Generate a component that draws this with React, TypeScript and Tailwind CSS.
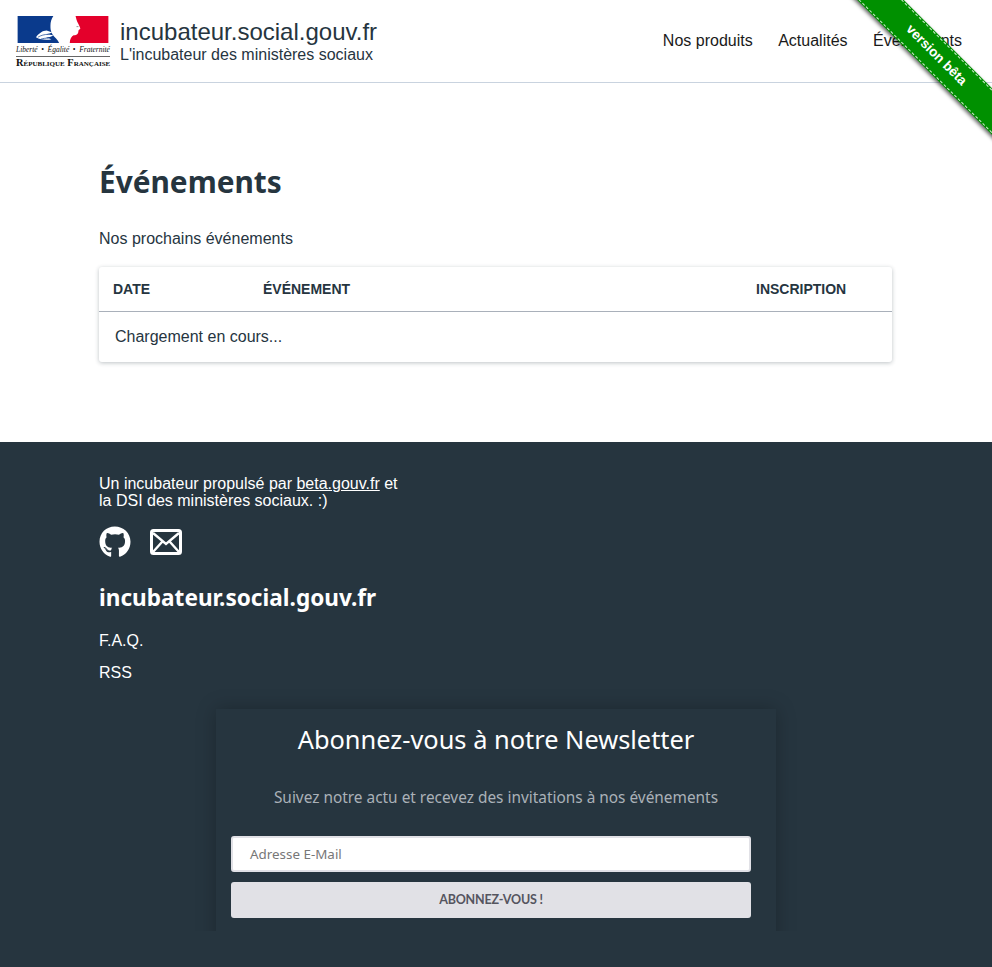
import React from 'react'
import { FaGithub } from 'react-icons/fa'

const SANS = "font-['Liberation_Sans',Arial,sans-serif]"
const HEADING = "font-['Noto_Sans',sans-serif]"

const Logo = () => (
  <div className="w-[94px] h-[50px] flex flex-col shrink-0">
    <svg viewBox="0 0 94 28" className="w-[94px] h-[28px] block">
      <rect width="52" height="28" fill="#0a3a8c" />
      <rect x="52" width="42" height="28" fill="#e4002b" />
      <path
        d="M37 0h23l1 4c1 3 3 6 4 9l-2 2c0 3-1 5-5 5-2 1-4 4-4 8H43c-1-3-5-6-7-9-2-4-2-6-2-9 0-4 1-7 3-10z"
        fill="#fff"
      />
      <path
        d="M19 22c3-4 7-7 11-7l6 2c-2 1-4 1-6 2l7 1c-2 2-5 2-8 2l6 2c-4 1-11 1-16-2z"
        fill="#fff"
      />
      <path d="M21 22c3-2 7-3 11-3M24 24c3-1 5-1 8-1" stroke="#0a3a8c" strokeWidth="0.7" fill="none" />
      <path d="M61 11h2" stroke="#777" strokeWidth="0.8" />
    </svg>
    <div className="h-[8px] mt-[3px] text-[7.5px] leading-[8px] italic whitespace-nowrap text-[#111] font-['Liberation_Serif',serif] flex justify-between">
      <span>Liberté</span>
      <span>•</span>
      <span>Égalité</span>
      <span>•</span>
      <span>Fraternité</span>
    </div>
    <div className="h-px bg-[#666] mt-[2px]" />
    <div className="mt-[2px] text-[10.4px] leading-[7px] whitespace-nowrap font-semibold text-[#111] text-center [font-variant:small-caps] font-['Liberation_Serif',serif]">
      République Française
    </div>
  </div>
)

const Header = () => (
  <header className="h-[83px] border-b border-[#c9d3df] bg-white flex items-center justify-between pl-4 pr-[30px]">
    <div className="flex items-center gap-[10px]">
      <Logo />
      <div className="text-[#26353f]">
        <div className="text-[24px] leading-[28px]">incubateur.social.gouv.fr</div>
        <div className="text-base leading-[18px]">L'incubateur des ministères sociaux</div>
      </div>
    </div>
    <nav className="flex items-center gap-[25.5px] text-base text-[#1a1a1a] mt-[-1px]">
      <a>Nos produits</a>
      <a>Actualités</a>
      <a>Événements</a>
    </nav>
  </header>
)

const Ribbon = () => (
  <div className="absolute top-0 right-0 w-[160px] h-[150px] overflow-hidden pointer-events-none">
    <div className="absolute left-[-26px] top-[39px] w-[260px] h-[33px] rotate-45 bg-[#009000] shadow-[0_2px_4px_rgba(0,0,0,0.6)] p-px">
      <div className="h-full border-y border-dashed border-[#cfe9cf] flex items-center justify-center text-[13.5px] font-bold text-white">
        version bêta
      </div>
    </div>
  </div>
)

const EventsTable = () => (
  <div className="mt-[18px] rounded-[3px] bg-white shadow-[0_1px_4px_rgba(38,53,63,0.3)]">
    <div className="h-[45px] border-b border-[#a9b0ba] flex items-center text-sm font-bold uppercase text-[#26353f]">
      <div className="w-[164px] pl-[14px]">Date</div>
      <div className="w-[493px]">Événement</div>
      <div>Inscription</div>
    </div>
    <div className="h-[50px] flex items-center pl-4 text-base text-[#26353f]">Chargement en cours...</div>
  </div>
)

const MailIcon = () => (
  <svg viewBox="0 0 32 26" className="w-8 h-[26px] block">
    <rect x="1.5" y="1.5" width="29" height="23" rx="2" fill="none" stroke="#fff" strokeWidth="3" />
    <path d="M3 4l13 11L29 4M3 23l9-10M29 23l-9-10" fill="none" stroke="#fff" strokeWidth="2.4" />
  </svg>
)

const Newsletter = () => (
  <div className="overflow-hidden h-[242px] pt-5 mt-[7px]">
    <div className="w-[560px] h-[260px] mx-auto bg-[#26353f] shadow-[0_0_18px_rgba(0,0,0,0.25)] pl-[15px] pr-[25px]">
      <h2 className={`${HEADING} text-center text-[25.4px] leading-[34px] text-white pt-[13px] ml-[-15px] mr-[-25px]`}>
        Abonnez-vous à notre Newsletter
      </h2>
      <p className={`${HEADING} text-center text-[15.4px] leading-[20px] text-[#aab1b8] mt-[32px] ml-[-15px] mr-[-25px]`}>
        Suivez notre actu et recevez des invitations à nos événements
      </p>
      <div className={`${HEADING} mt-[28px] h-9 rounded-[3px] bg-white border-2 border-[#e1e1e6] pl-[17px] flex items-center text-[13.4px] text-[#777]`}>
        Adresse E-Mail
      </div>
      <button className="mt-[10px] w-full h-9 rounded-[3px] bg-[#e1e1e6] text-[12.5px] font-bold text-[#55555f] font-['Lato',sans-serif] tracking-[-0.2px]">
        ABONNEZ-VOUS !
      </button>
    </div>
  </div>
)

const Footer = () => (
  <footer className="bg-[#26353f] h-[525px] text-white pt-[33px]">
    <div className="w-[793px] ml-[99px]">
      <p className="w-[310px] text-base leading-[17px]">
        Un incubateur propulsé par <a className="underline">beta.gouv.fr</a> et la DSI des ministères sociaux. :)
      </p>
      <div className="flex items-center gap-[19px] mt-[17px]">
        <FaGithub className="w-8 h-8" />
        <MailIcon />
      </div>
      <h3 className={`${HEADING} text-[22.6px] leading-[32px] font-bold mt-[24px]`}>incubateur.social.gouv.fr</h3>
      <div className="mt-[18px] text-base leading-[18px]">F.A.Q.</div>
      <div className="mt-[14px] text-base leading-[18px]">RSS</div>
    </div>
    <Newsletter />
  </footer>
)

export default function App() {
  return (
    <div className={`${SANS} relative min-h-[967px] bg-white overflow-hidden`}>
      <Header />
      <Ribbon />
      <main className="w-[793px] ml-[99px] h-[359px] pt-[78px] text-[#26353f]">
        <h1 className={`${HEADING} text-[29.8px] leading-[42px] font-bold`}>Événements</h1>
        <p className="mt-[26px] text-base leading-[20px]">Nos prochains événements</p>
        <EventsTable />
      </main>
      <Footer />
    </div>
  )
}
